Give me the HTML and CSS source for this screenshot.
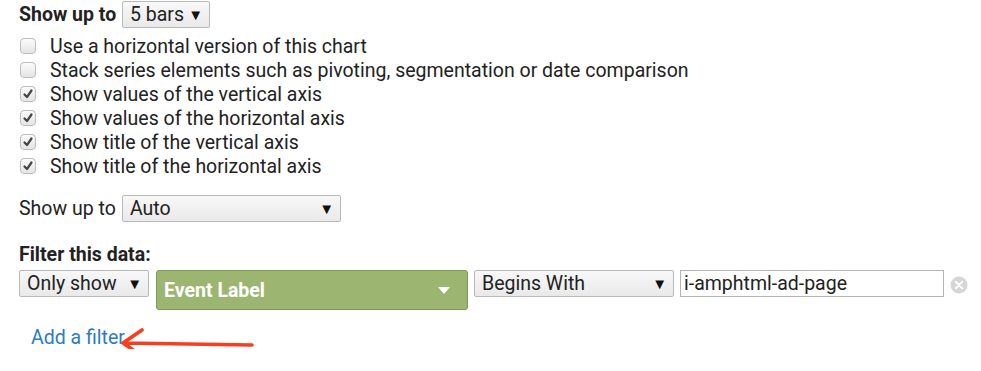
FILE: index.html
```html
<!DOCTYPE html>
<html>
<head>
<meta charset="utf-8">
<link rel="stylesheet" href="styles.css">
</head>
<body>
<div class="page">
  <div class="row top">
    <span class="bold label">Show up to</span>
    <div class="select sel-bars"><span>5 bars</span><span class="tri">▼</span></div>
  </div>
  <div class="checks">
    <label class="check"><span class="box"></span>Use a horizontal version of this chart</label>
    <label class="check"><span class="box"></span>Stack series elements such as pivoting, segmentation or date comparison</label>
    <label class="check"><span class="box on"><svg viewBox="0 0 12 12"><path d="M2.5 6.5 L5 9 L9.5 2.5" /></svg></span>Show values of the vertical axis</label>
    <label class="check"><span class="box on"><svg viewBox="0 0 12 12"><path d="M2.5 6.5 L5 9 L9.5 2.5" /></svg></span>Show values of the horizontal axis</label>
    <label class="check"><span class="box on"><svg viewBox="0 0 12 12"><path d="M2.5 6.5 L5 9 L9.5 2.5" /></svg></span>Show title of the vertical axis</label>
    <label class="check"><span class="box on"><svg viewBox="0 0 12 12"><path d="M2.5 6.5 L5 9 L9.5 2.5" /></svg></span>Show title of the horizontal axis</label>
  </div>
  <div class="row auto">
    <span class="label">Show up to</span>
    <div class="select sel-auto"><span>Auto</span><span class="tri">▼</span></div>
  </div>
  <div class="bold filter-title">Filter this data:</div>
  <div class="filter-row">
    <div class="select sel-only"><span>Only show</span><span class="tri">▼</span></div>
    <div class="green"><span>Event Label</span><svg class="gtri" viewBox="0 0 12 7"><path d="M0 0 L12 0 L6 7 Z"/></svg></div>
    <div class="select sel-begins"><span>Begins With</span><span class="tri">▼</span></div>
    <div class="input">i-amphtml-ad-page</div>
    <svg class="clear" viewBox="0 0 18 18"><circle cx="9" cy="9" r="8.5" fill="#d6d6d6"/><path d="M5.8 5.8 L12.2 12.2 M12.2 5.8 L5.8 12.2" stroke="#fff" stroke-width="2" stroke-linecap="round"/></svg>
  </div>
  <div class="add-row">
    <a class="add">Add a filter</a>
    <svg class="arrow" viewBox="0 0 140 34"><path d="M133 18 L4 16 M23 3 L4 16 L23 29" fill="none" stroke="#fa3d1c" stroke-width="3.6" stroke-linecap="round" stroke-linejoin="round"/></svg>
  </div>
</div>
</body>
</html>
```
FILE: styles.css
```css
html, body {
  margin: 0;
  padding: 0;
  background: #fff;
}
.page {
  position: relative;
  font-family: Roboto, "Noto Sans", sans-serif;
  font-size: 19.5px;
  color: #222;
  padding: 1px 0 0 19px;
}
.bold {
  font-weight: bold;
}
.row {
  display: flex;
  align-items: center;
}
.label {
  width: 103px;
}
.select {
  display: flex;
  align-items: center;
  justify-content: space-between;
  box-sizing: border-box;
  height: 27px;
  padding: 0 6px 0 7px;
  border: 1px solid #b9b9b9;
  border-radius: 2px;
  background: linear-gradient(#f8f8f8, #e9e9e9);
  color: #222;
}
.tri {
  font-size: 15px;
  color: #111;
}
.sel-bars {
  width: 88px;
}
.checks {
  display: flex;
  flex-direction: column;
  margin-top: 6px;
}
.check {
  display: flex;
  align-items: center;
  height: 24px;
  gap: 14px;
}
.box {
  box-sizing: border-box;
  width: 16px;
  height: 16px;
  margin-left: 1px;
  border: 1px solid #bdbdbd;
  border-radius: 4px;
  background: linear-gradient(#fbfbfb, #e4e4e4);
  display: flex;
  align-items: center;
  justify-content: center;
}
.box svg {
  width: 12px;
  height: 12px;
}
.box svg path {
  fill: none;
  stroke: #444;
  stroke-width: 2.2;
  stroke-linecap: round;
  stroke-linejoin: round;
}
.auto {
  margin-top: 17px;
}
.sel-auto {
  width: 219px;
}
.filter-title {
  margin-top: 21px;
}
.filter-row {
  display: flex;
  align-items: flex-start;
  margin-top: 4px;
}
.sel-only {
  width: 130px;
}
.green {
  box-sizing: border-box;
  width: 312px;
  height: 40px;
  margin-left: 7px;
  padding: 0 17px 0 7px;
  background: #9cb671;
  border: 1px solid #7e9a56;
  border-radius: 3px;
  color: #fff;
  font-weight: bold;
  display: flex;
  align-items: center;
  justify-content: space-between;
}
.gtri {
  width: 12px;
  height: 7px;
  fill: #fff;
}
.sel-begins {
  width: 200px;
  margin-left: 6px;
}
.input {
  box-sizing: border-box;
  width: 264px;
  height: 27px;
  margin-left: 6px;
  padding: 0 3px;
  border: 1px solid #b5b5b5;
  display: flex;
  align-items: center;
  color: #222;
}
.clear {
  width: 18px;
  height: 18px;
  margin: 6px 0 0 6px;
}
.add-row {
  position: relative;
  margin-top: 16px;
  padding-left: 12px;
}
.add {
  color: #2d7bc0;
}
.arrow {
  position: absolute;
  left: 100px;
  top: 1px;
  width: 140px;
  height: 34px;
}
```
